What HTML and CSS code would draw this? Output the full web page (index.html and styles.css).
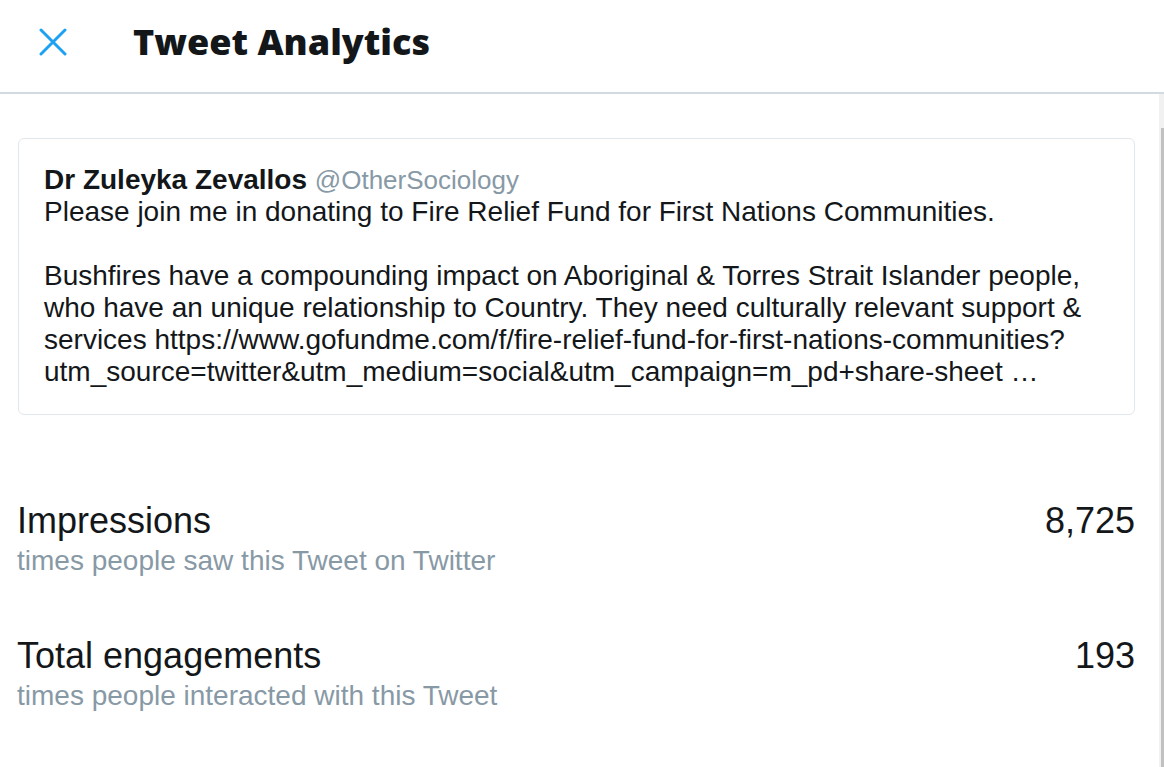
FILE: index.html
```html
<!DOCTYPE html>
<html>
<head>
<meta charset="utf-8">
<link rel="stylesheet" href="styles.css">
</head>
<body>
<header class="topbar">
  <button class="close" aria-label="Close">
    <svg viewBox="0 0 28 28" width="28" height="28"><path d="M2 2 L26 26 M26 2 L2 26" stroke="#1da1f2" stroke-width="3" stroke-linecap="round" fill="none"/></svg>
  </button>
  <h1 class="title">Tweet Analytics</h1>
</header>
<main class="content">
  <section class="card">
    <div class="author"><span class="name">Dr Zuleyka Zevallos</span> <span class="handle">@OtherSociology</span></div>
    <p class="text">Please join me in donating to Fire Relief Fund for First Nations Communities.</p>
    <p class="text gap">Bushfires have a compounding impact on Aboriginal &amp; Torres Strait Islander people, who have an unique relationship to Country. They need culturally relevant support &amp; services https://www.gofundme.com/f/fire-relief-fund-for-first-nations-communities?utm_source=twitter&amp;utm_medium=social&amp;utm_campaign=m_pd+share-sheet …</p>
  </section>
  <section class="stats">
    <div class="stat">
      <div class="stat-head"><span class="stat-label">Impressions</span><span class="stat-value">8,725</span></div>
      <div class="stat-desc">times people saw this Tweet on Twitter</div>
    </div>
    <div class="stat">
      <div class="stat-head"><span class="stat-label">Total engagements</span><span class="stat-value">193</span></div>
      <div class="stat-desc">times people interacted with this Tweet</div>
    </div>
  </section>
</main>
<div class="scroll-track"><div class="scroll-thumb"></div></div>
</body>
</html>
```
FILE: styles.css
```css
html, body {
  margin: 0;
  padding: 0;
  background: #ffffff;
  font-family: "Liberation Sans", Arial, sans-serif;
  color: #14171a;
  overflow: hidden;
}
.topbar {
  height: 84px;
  padding-bottom: 8px;
  border-bottom: 2px solid #d2dbe1;
  display: flex;
  align-items: center;
  box-sizing: content-box;
}
.close {
  border: 0;
  background: none;
  padding: 0;
  margin: 0 0 0 39px;
  width: 28px;
  height: 28px;
  display: flex;
}
.title {
  margin: 0 0 0 66px;
  font-family: "Open Sans", Roboto, "Liberation Sans", sans-serif;
  font-weight: 800;
  font-size: 36px;
  line-height: 44px;
  color: #14171a;
}
.content {
  padding: 44px 29px 0 17px;
}
.card {
  border: 1px solid #e1e8ed;
  border-radius: 6px;
  padding: 25px 26px 26px 25px;
  margin-left: 1px;
}
.author {
  font-size: 28px;
  line-height: 32px;
}
.name {
  font-weight: bold;
  color: #14171a;
}
.handle {
  font-size: 26px;
  color: #8899a6;
}
.text {
  margin: 0;
  font-size: 28px;
  line-height: 32px;
  color: #14171a;
}
.text.gap {
  margin-top: 32px;
}
.stats {
  padding-top: 85px;
}
.stat {
  margin-bottom: 55px;
}
.stat-head {
  display: flex;
  justify-content: space-between;
  align-items: baseline;
  font-size: 36px;
  line-height: 42px;
  color: #14171a;
}
.stat-desc {
  font-size: 28px;
  line-height: 38px;
  color: #8899a6;
}
.scroll-track {
  position: absolute;
  top: 94px;
  right: 0;
  bottom: 0;
  width: 5px;
  background: #f1f1f1;
}
.scroll-thumb {
  position: absolute;
  top: 34px;
  right: 0;
  bottom: 0;
  width: 3px;
  background: #c1c1c1;
}
```
